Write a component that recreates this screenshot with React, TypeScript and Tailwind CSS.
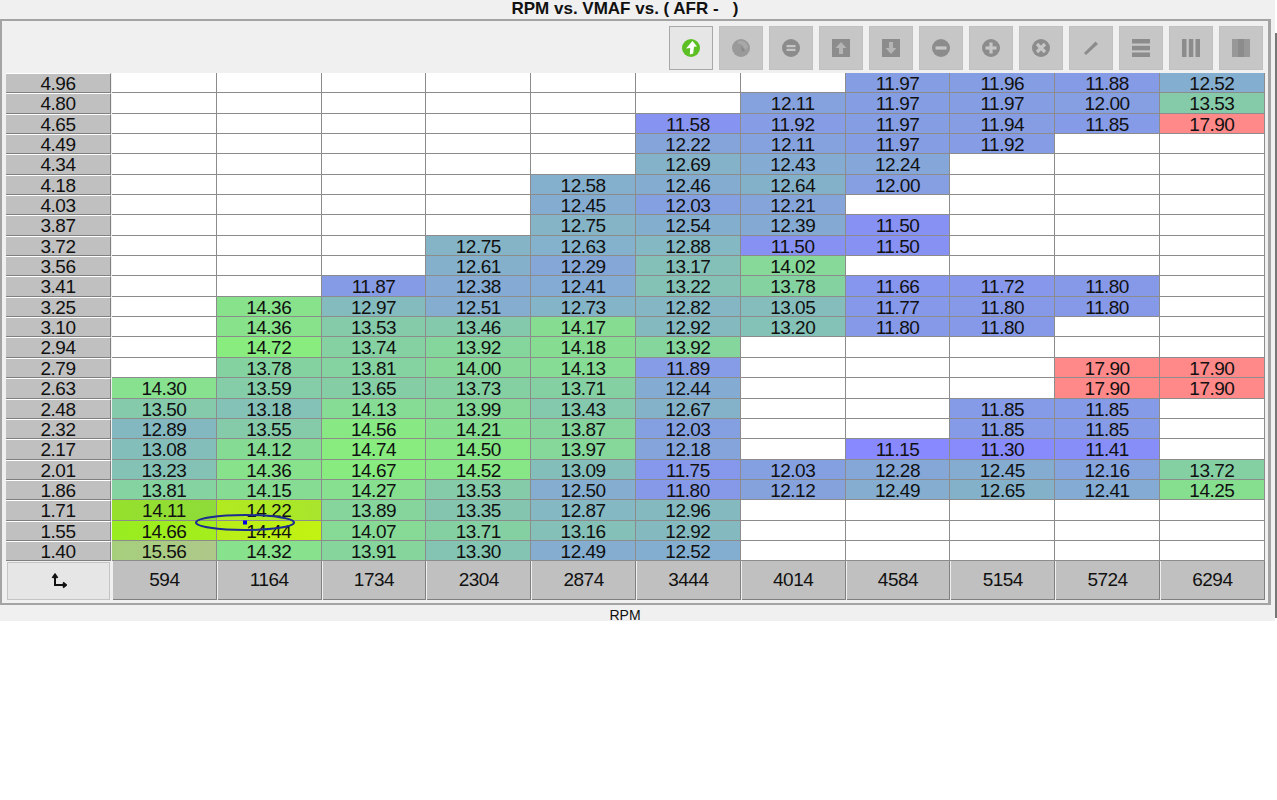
import React from "react";

type Cell = number | null;
const _ = null;

const ROWS: [string, Cell[]][] = [
  ["4.96", [_, _, _, _, _, _, _, 11.97, 11.96, 11.88, 12.52]],
  ["4.80", [_, _, _, _, _, _, 12.11, 11.97, 11.97, 12.0, 13.53]],
  ["4.65", [_, _, _, _, _, 11.58, 11.92, 11.97, 11.94, 11.85, 17.9]],
  ["4.49", [_, _, _, _, _, 12.22, 12.11, 11.97, 11.92, _, _]],
  ["4.34", [_, _, _, _, _, 12.69, 12.43, 12.24, _, _, _]],
  ["4.18", [_, _, _, _, 12.58, 12.46, 12.64, 12.0, _, _, _]],
  ["4.03", [_, _, _, _, 12.45, 12.03, 12.21, _, _, _, _]],
  ["3.87", [_, _, _, _, 12.75, 12.54, 12.39, 11.5, _, _, _]],
  ["3.72", [_, _, _, 12.75, 12.63, 12.88, 11.5, 11.5, _, _, _]],
  ["3.56", [_, _, _, 12.61, 12.29, 13.17, 14.02, _, _, _, _]],
  ["3.41", [_, _, 11.87, 12.38, 12.41, 13.22, 13.78, 11.66, 11.72, 11.8, _]],
  ["3.25", [_, 14.36, 12.97, 12.51, 12.73, 12.82, 13.05, 11.77, 11.8, 11.8, _]],
  ["3.10", [_, 14.36, 13.53, 13.46, 14.17, 12.92, 13.2, 11.8, 11.8, _, _]],
  ["2.94", [_, 14.72, 13.74, 13.92, 14.18, 13.92, _, _, _, _, _]],
  ["2.79", [_, 13.78, 13.81, 14.0, 14.13, 11.89, _, _, _, 17.9, 17.9]],
  ["2.63", [14.3, 13.59, 13.65, 13.73, 13.71, 12.44, _, _, _, 17.9, 17.9]],
  ["2.48", [13.5, 13.18, 14.13, 13.99, 13.43, 12.67, _, _, 11.85, 11.85, _]],
  ["2.32", [12.89, 13.55, 14.56, 14.21, 13.87, 12.03, _, _, 11.85, 11.85, _]],
  ["2.17", [13.08, 14.12, 14.74, 14.5, 13.97, 12.18, _, 11.15, 11.3, 11.41, _]],
  ["2.01", [13.23, 14.36, 14.67, 14.52, 13.09, 11.75, 12.03, 12.28, 12.45, 12.16, 13.72]],
  ["1.86", [13.81, 14.15, 14.27, 13.53, 12.5, 11.8, 12.12, 12.49, 12.65, 12.41, 14.25]],
  ["1.71", [14.11, 14.22, 13.89, 13.35, 12.87, 12.96, _, _, _, _, _]],
  ["1.55", [14.66, 14.44, 14.07, 13.71, 13.16, 12.92, _, _, _, _, _]],
  ["1.40", [15.56, 14.32, 13.91, 13.3, 12.49, 12.52, _, _, _, _, _]],
];

const RPM = [594, 1164, 1734, 2304, 2874, 3444, 4014, 4584, 5154, 5724, 6294];

const OVERRIDES: Record<string, string> = {
  "1.71:0": "linear-gradient(90deg,#96e02c,#8edb3a)",
  "1.71:1": "linear-gradient(90deg,#b2ea20,#a8e52c)",
  "1.55:0": "linear-gradient(90deg,#98ec20,#a4ee1c)",
  "1.55:1": "linear-gradient(90deg,#b8ee18,#c2f212)",
  "1.40:0": "linear-gradient(90deg,#a6cf7c,#aec88a)",
};

function colorOf(v: number): string {
  if (v >= 17) return "#ff8888";
  const t = Math.max(0, Math.min(1, (v - 11.2) / 3.5));
  const r = 136 - Math.sin(t * Math.PI) * 4;
  const g = 136 + t * 100;
  const b = 255 - t * 128;
  return `rgb(${Math.round(r)},${Math.round(g)},${Math.round(b)})`;
}

function Icon({ children }: { children: React.ReactNode }) {
  return (
    <svg width="20" height="20" viewBox="0 0 20 20">
      {children}
    </svg>
  );
}

const G = "#8c8c8c";
const L = "#c6c6c6";

const ICONS: React.ReactNode[] = [
  <Icon key="a">
    <circle cx="10" cy="10" r="9" fill="#5cc024" />
    <path d="M11.5 3 L16 8.5 L13 8.8 L12.2 15.5 L8.8 16.5 L9.2 10 L5 10.5 Z" fill="#ffffff" />
  </Icon>,
  <Icon key="b">
    <circle cx="10" cy="10" r="9" fill="#9a9a9a" />
    <path d="M7 3 A8 8 0 0 1 17 9 L15 12 L13 10 A5 5 0 0 0 7 6 Z" fill="#a8a8a8" />
    <path d="M10 8 L14 12 L11 14 Z" fill="#888888" />
  </Icon>,
  <Icon key="c">
    <circle cx="10" cy="10" r="9" fill={G} />
    <rect x="5.5" y="7" width="9" height="2.2" fill={L} />
    <rect x="5.5" y="10.8" width="9" height="2.2" fill={L} />
  </Icon>,
  <Icon key="d">
    <rect x="1" y="1" width="18" height="18" fill={G} />
    <path d="M10 4 L15.5 10 L12 10 L12 16 L8 16 L8 10 L4.5 10 Z" fill="#b4b4b4" />
  </Icon>,
  <Icon key="e">
    <rect x="1" y="1" width="18" height="18" fill={G} />
    <path d="M10 16 L15.5 10 L12 10 L12 4 L8 4 L8 10 L4.5 10 Z" fill="#b4b4b4" />
  </Icon>,
  <Icon key="f">
    <circle cx="10" cy="10" r="9" fill={G} />
    <rect x="4.5" y="8.4" width="11" height="3.2" fill={L} />
  </Icon>,
  <Icon key="g">
    <circle cx="10" cy="10" r="9" fill={G} />
    <rect x="4.5" y="8.4" width="11" height="3.2" fill={L} />
    <rect x="8.4" y="4.5" width="3.2" height="11" fill={L} />
  </Icon>,
  <Icon key="h">
    <circle cx="10" cy="10" r="9" fill={G} />
    <path d="M6 6 L14 14 M14 6 L6 14" stroke={L} strokeWidth="3.2" />
  </Icon>,
  <Icon key="i">
    <path d="M3 15 L5 17 L17 6 L14.5 3.5 Z" fill={G} />
  </Icon>,
  <Icon key="j">
    <rect x="1" y="1" width="18" height="4.5" fill={G} />
    <rect x="1" y="7.8" width="18" height="4.5" fill={G} />
    <rect x="1" y="14.5" width="18" height="4.5" fill={G} />
  </Icon>,
  <Icon key="k">
    <rect x="1" y="1" width="4.5" height="18" fill={G} />
    <rect x="7.8" y="1" width="4.5" height="18" fill={G} />
    <rect x="14.5" y="1" width="4.5" height="18" fill={G} />
  </Icon>,
  <Icon key="l">
    <rect x="1" y="1" width="18" height="18" fill="#989898" />
    <rect x="7" y="1" width="6" height="18" fill={G} />
  </Icon>,
];

export default function App() {
  return (
    <div className="relative flex w-[1277px] h-[800px] items-start bg-white text-[#111111] font-['Liberation_Sans',sans-serif]">
      <div className="flex flex-col w-[1275px] h-[621px] bg-[#f0f0f0]">
        <div className="h-[19px] pr-[25px] text-center text-[17px] leading-[18px] font-bold whitespace-pre">
          {"RPM vs. VMAF vs. ( AFR -   )"}
        </div>
        <div className="flex flex-col w-[1271px] h-[586px] border-2 border-r-[3px] border-[#a4a4a4] pl-[4px]">
          <div className="flex justify-end gap-[6px] h-[52px] pt-[5px] pr-[5px]">
            {ICONS.map((icon, i) => (
              <div
                key={i}
                className={
                  i === 0
                    ? "flex items-center justify-center w-[44px] h-[44px] bg-[#e6e6e6] border border-[#a8a8a8]"
                    : "flex items-center justify-center w-[44px] h-[44px] bg-[#c6c6c6] border border-[#c0c0c0]"
                }
              >
                {icon}
              </div>
            ))}
          </div>
          <div className="grid grid-cols-[106px_repeat(11,104.8px)] grid-rows-[repeat(24,20.35px)_39px] text-[19px] tracking-[-0.5px] text-center">
            {ROWS.map(([label, cells]) => (
              <React.Fragment key={label}>
                <div className="mr-px bg-[#c0c0c0] border-t border-t-white border-b border-b-[#808080] border-r border-r-[#808080] overflow-hidden leading-[19px]">
                  {label}
                </div>
                {cells.map((v, i) => (
                  <div
                    key={i}
                    className="border-r border-b border-[#8c8c8c] overflow-hidden leading-[21px]"
                    style={{
                      background:
                        v === null ? "#ffffff" : OVERRIDES[`${label}:${i}`] ?? colorOf(v),
                    }}
                  >
                    {v === null ? "" : v.toFixed(2)}
                  </div>
                ))}
              </React.Fragment>
            ))}
            <div className="flex items-center justify-center mr-[2px] ml-px mt-px bg-[#e6e6e6] border border-[#c4c4c4]">
              <svg width="16" height="16" viewBox="0 0 16 16">
                <path
                  d="M4 3 V12 H14 M1.5 5 L4 1.5 L6.5 5 M12 9.5 L15 12 L12 14.5"
                  fill="none"
                  stroke="#111111"
                  strokeWidth="2"
                />
              </svg>
            </div>
            {RPM.map((r) => (
              <div
                key={r}
                className="flex items-center justify-center ml-px bg-[#c0c0c0] border-r border-b border-[#808080]"
              >
                {r}
              </div>
            ))}
          </div>
        </div>
        <div className="h-[16px] pr-[25px] text-center text-[14px] leading-[20px]">RPM</div>
      </div>
      <div className="w-[2px] h-[585px] mt-[33px] bg-[#777777]" />
      <svg
        className="absolute left-[190px] top-[508px]"
        width="112"
        height="28"
        viewBox="0 0 112 28"
      >
        <ellipse cx="55" cy="14.5" rx="49" ry="7.5" fill="none" stroke="#1c2c90" strokeWidth="2" />
        <rect x="53" y="12.5" width="4" height="4" fill="#0000e0" />
      </svg>
    </div>
  );
}
